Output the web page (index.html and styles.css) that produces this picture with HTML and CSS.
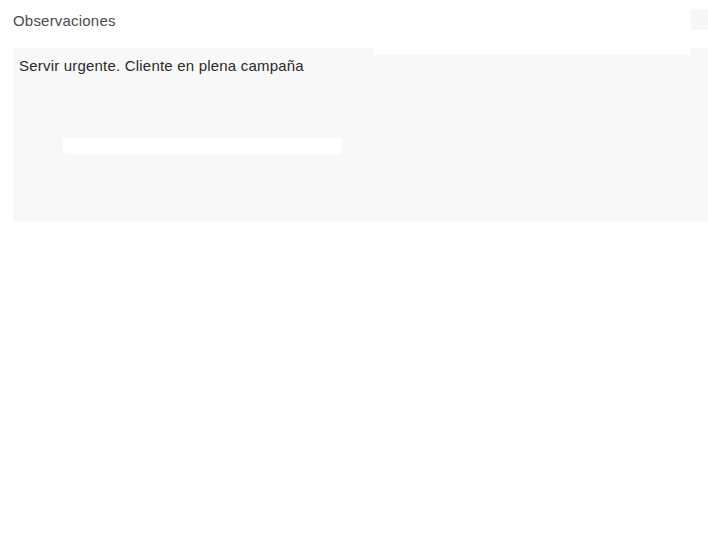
FILE: index.html
```html
<!DOCTYPE html>
<html>
<head>
  <meta charset="UTF-8">
  <title>Observaciones</title>
  <link rel="stylesheet" href="styles.css">
</head>
<body>
  <div class="field">
    <div class="field-header">
      <span class="field-label">Observaciones</span>
      <span class="field-toggle"></span>
    </div>
    <div class="field-box">
      <div class="field-mask"></div>
      <div class="field-text">Servir urgente. Cliente en plena campaña</div>
      <div class="field-hint"></div>
    </div>
  </div>
</body>
</html>
```

FILE: styles.css
```css
body {
  margin: 0;
  font-family: 'Liberation Sans', 'Helvetica', sans-serif;
  background: #ffffff;
  color: #333333;
}
.field {
  padding-left: 13px;
}
.field-header {
  display: flex;
  align-items: center;
  justify-content: space-between;
  height: 48px;
  box-sizing: border-box;
}
.field-label {
  font-size: 15px;
  letter-spacing: 0.2px;
  color: #4a4a4a;
  margin-top: -8px;
}
.field-toggle {
  width: 17px;
  height: 21px;
  background: #f7f7f7;
  margin-top: -9px;
}
.field-box {
  position: relative;
  height: 174px;
  background: #f8f8f8;
  padding: 9px 6px;
  box-sizing: border-box;
}
.field-text {
  font-size: 15px;
  letter-spacing: 0.2px;
  color: #2a2a2a;
}
/* franjas blancas sobre la caja */
.field-mask {
  position: absolute;
  top: 0;
  left: 360px;
  width: 318px;
  height: 7px;
  background: #ffffff;
}
.field-hint {
  position: absolute;
  top: 90px;
  left: 50px;
  width: 279px;
  height: 16px;
  background: #ffffff;
  border-radius: 3px;
}
```
